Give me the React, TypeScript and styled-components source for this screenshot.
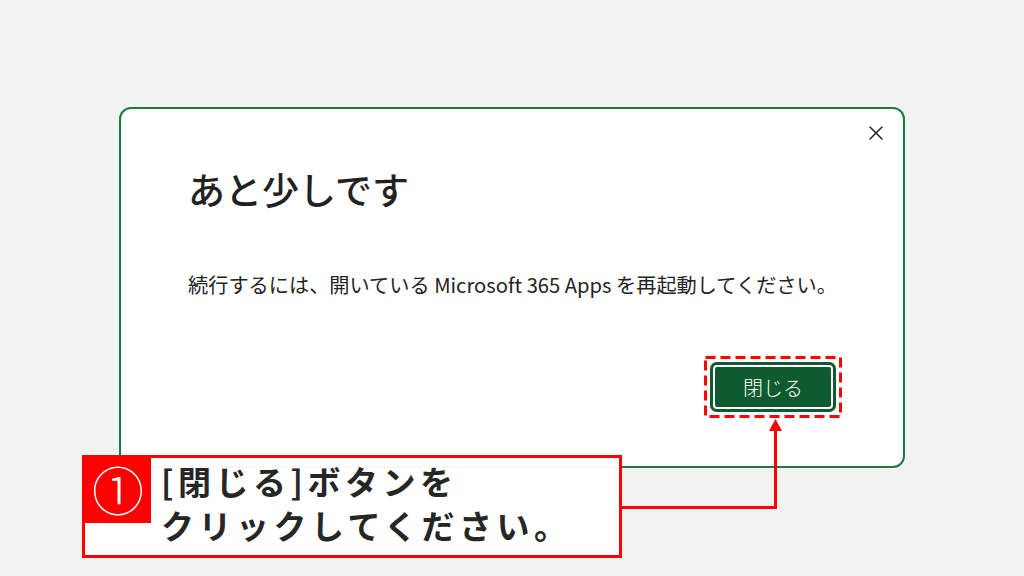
import React from 'react'
import styled, { createGlobalStyle } from 'styled-components';

const GlobalStyle = createGlobalStyle`
    html, body {
        margin: 0;
        padding: 0;
    }
    body {
        background: #f2f2f2;
        font-family: "Noto Sans CJK JP", "Noto Sans", sans-serif;
    }
`;

const Page = styled.div`
    position: relative;
    width: 1024px;
    height: 576px;
    overflow: hidden;
    background: #f2f2f2;
    padding: 107px 0 0 119px;
    box-sizing: border-box;
`;

const Dialog = styled.div`
    position: relative;
    box-sizing: border-box;
    width: 786px;
    height: 361px;
    background: #ffffff;
    border: 2px solid #1a7c43;
    border-radius: 12px;
    padding: 55px 67px 0;
    display: flex;
    flex-direction: column;
    color: #242424;
`;

const Close = styled.button`
    position: absolute;
    top: 13px;
    right: 16px;
    width: 22px;
    height: 22px;
    padding: 0;
    border: 0;
    background: none;
    display: flex;
    align-items: center;
    justify-content: center;
    cursor: pointer;
`;

const Title = styled.h1`
    margin: 0;
    font-size: 37px;
    line-height: 50px;
    font-weight: 500;
    letter-spacing: 0;
    color: #222222;
`;

const Message = styled.p`
    margin: 56px 0 0;
    font-size: 20.2px;
    line-height: 30px;
    font-weight: 400;
    white-space: nowrap;
`;

const Footer = styled.div`
    margin-top: 62px;
    display: flex;
    justify-content: flex-end;
`;

const Highlight = styled.div`
    position: relative;
`;

const DashFrame = styled.svg`
    position: absolute;
    left: -6px;
    top: -6px;
    pointer-events: none;
`;

const PrimaryButton = styled.button`
    width: 126px;
    height: 50px;
    border: 0;
    border-radius: 7px;
    background: #0f5a2e;
    box-shadow: inset 0 0 0 3px #0f5a2e, inset 0 0 0 5px #ffffff;
    color: #ffffff;
    font-family: "Noto Sans CJK JP", sans-serif;
    font-size: 20px;
    font-weight: 300;
    cursor: pointer;
`;

const Callout = styled.div`
    position: absolute;
    left: 82px;
    top: 455px;
    width: 540px;
    height: 103px;
    box-sizing: border-box;
    border: 3px solid #ff0000;
    background: rgba(255, 255, 255, 0.96);
    display: flex;
    align-items: flex-start;
`;

const Step = styled.div`
    width: 66px;
    height: 65px;
    flex-shrink: 0;
    background: #ff0000;
    color: #ffffff;
    font-size: 52px;
    line-height: 62px;
    text-align: center;
    font-weight: 300;
`;

const CalloutText = styled.div`
    margin-left: 10px;
    padding-top: 1px;
    font-size: 33px;
    line-height: 44px;
    font-weight: 700;
    letter-spacing: 4.5px;
    color: #262626;
    white-space: nowrap;
`;

const Leader = styled.svg`
    position: absolute;
    left: 0;
    top: 0;
    pointer-events: none;
`;

const App = () => {
    return (
        <>
            <GlobalStyle/>
            <Page>
                <Dialog>
                    <Close aria-label="閉じる">
                        <svg width="16" height="16" viewBox="0 0 16 16">
                            <path d="M2 2 L14 14 M14 2 L2 14" stroke="#242424" strokeWidth="1.5" strokeLinecap="round"/>
                        </svg>
                    </Close>
                    <Title>あと少しです</Title>
                    <Message>続行するには、開いている Microsoft 365 Apps を再起動してください。</Message>
                    <Footer>
                        <Highlight>
                            <PrimaryButton>閉じる</PrimaryButton>
                            <DashFrame width="138" height="62" viewBox="0 0 138 62">
                                <rect x="1.5" y="1.5" width="135" height="59" fill="none" stroke="#ff0000" strokeWidth="3" strokeDasharray="10 5"/>
                            </DashFrame>
                        </Highlight>
                    </Footer>
                </Dialog>
                <Leader width="1024" height="576" viewBox="0 0 1024 576">
                    <path d="M622 507.5 H775.5 V428" fill="none" stroke="#ff0000" strokeWidth="3"/>
                    <path d="M769 431 L775.5 419 L782 431 Z" fill="#ff0000"/>
                </Leader>
                <Callout>
                    <Step>①</Step>
                    <CalloutText>
                        [閉じる]ボタンを<br/>
                        クリックしてください。
                    </CalloutText>
                </Callout>
            </Page>
        </>
    );
}

export default App
